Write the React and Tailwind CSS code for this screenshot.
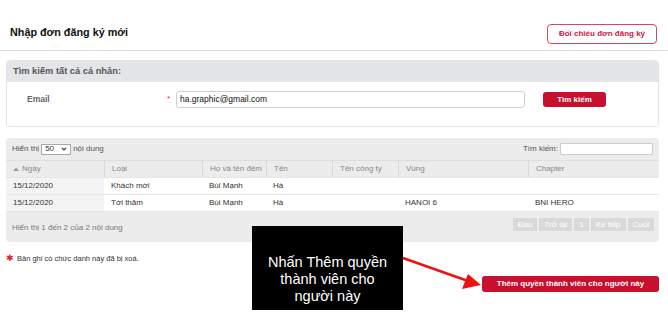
import React from "react";

const font = { fontFamily: '"Liberation Sans", Arial, sans-serif' };

const cols = "grid grid-cols-[98px_98px_64px_66px_66px_130px_1fr]";

function Row({ cells }) {
  return (
    <div className={`${cols} h-[17px] items-center text-[8px] text-[#333] border-t border-[#e6e6e6]`}>
      {cells.map((c, i) => (
        <div key={i} className={`h-full flex items-center px-[7px] whitespace-nowrap ${i === 0 ? "bg-[#f3f3f3]" : "bg-white"}`}>
          {c}
        </div>
      ))}
    </div>
  );
}

export default function App() {
  const headers = ["Ngày", "Loại", "Họ và tên đệm", "Tên", "Tên công ty", "Vùng", "Chapter"];
  return (
    <div className="relative w-[668px] h-[319px] bg-white overflow-hidden" style={font}>
      {/* top bar */}
      <div className="flex items-end justify-between h-[51px] pl-[10px] pr-[11px] pb-[6px] border-b border-[#dcdcdc]">
        <div className="text-[10.8px] font-bold text-[#111] pb-[4px]">Nhập đơn đăng ký mới</div>
        <div className="h-[20px] w-[110px] flex items-center justify-center border border-[#d9465f] rounded-[4px] text-[8px] font-bold text-[#c8203f]">
          Đối chiếu đơn đăng ký
        </div>
      </div>

      {/* search panel */}
      <div className="mx-[6px] mt-[9px] w-[653px] border border-[#e2e2e2] rounded-[4px] overflow-hidden">
        <div className="h-[21px] bg-[#e4e5e8] flex items-center px-[6px] text-[9.3px] font-bold text-[#555]">
          Tìm kiếm tất cả cá nhân:
        </div>
        <div className="h-[44px] bg-white flex items-start pt-[9px]">
          <div className="w-[160px] pl-[20px] h-[17px] flex items-center text-[8.5px] font-bold text-[#666]">Email</div>
          <div className="w-[9px] h-[17px] flex items-start pt-[2px] text-[8px] text-[#e0303a]">*</div>
          <div className="w-[349px] h-[17px] border border-[#cfcfcf] rounded-[3px] flex items-center px-[3px] text-[8.5px] text-[#111]">
            ha.graphic@gmail.com
          </div>
          <div className="ml-[18px] mt-[1px] w-[63px] h-[15px] rounded-[3px] bg-[#c8102e] flex items-center justify-center text-[8px] font-bold text-white">
            Tìm kiếm
          </div>
        </div>
      </div>

      {/* table panel */}
      <div className="mx-[6px] mt-[11px] w-[653px] bg-[#ececec] rounded-[4px] overflow-hidden">
        <div className="h-[22px] flex items-center justify-between px-[6px] text-[8px] text-[#555]">
          <div className="flex items-center gap-[2px]">
            <span>Hiển thị</span>
            <div className="w-[30px] h-[11px] bg-white border border-[#aaa] flex items-center justify-between px-[3px] text-[8px] text-[#333]">
              <span>50</span>
              <svg width="6" height="4" viewBox="0 0 6 4"><path d="M0.8 0.8 L3 3 L5.2 0.8" stroke="#333" strokeWidth="1.1" fill="none" /></svg>
            </div>
            <span>nội dung</span>
          </div>
          <div className="flex items-center gap-[2px]">
            <span>Tìm kiếm:</span>
            <div className="w-[93px] h-[12px] bg-white border border-[#ccc] rounded-[1px]" />
          </div>
        </div>
        <div className={`${cols} h-[17px] text-[8px] text-[#888] bg-[#ececec] border-t border-[#dedede]`}>
          {headers.map((h, i) => (
            <div key={i} className={`flex items-center px-[7px] whitespace-nowrap ${i > 0 ? "border-l border-[#d8d8d8]" : ""}`}>
              {i === 0 && (
                <svg width="6" height="4" viewBox="0 0 6 4" className="mr-[3px]"><path d="M0 4 L3 0.5 L6 4 Z" fill="#999" /></svg>
              )}
              {h}
            </div>
          ))}
        </div>
        <Row cells={["15/12/2020", "Khách mời", "Bùi Mạnh", "Hà", "", "", ""]} />
        <Row cells={["15/12/2020", "Tới thăm", "Bùi Mạnh", "Hà", "", "HANOI 6", "BNI HERO"]} />
        <div className="h-[31px] flex items-start justify-between pl-[6px] pr-[5px] pt-[6px] border-t border-[#e6e6e6]">
          <div className="text-[8px] text-[#777] mt-[4px]">Hiển thị 1 đến 2 của 2 nội dung</div>
          <div className="flex gap-[2px] text-[8px] text-white">
            <div className="h-[13px] px-[5px] bg-[#d9d9dc] flex items-center">Đầu</div>
            <div className="h-[13px] px-[5px] bg-[#d9d9dc] flex items-center">Trở lại</div>
            <div className="h-[13px] px-[5px] bg-[#d9d9dc] flex items-center">1</div>
            <div className="h-[13px] px-[5px] bg-[#d9d9dc] flex items-center">Kế tiếp</div>
            <div className="h-[13px] px-[5px] bg-[#d9d9dc] flex items-center">Cuối</div>
          </div>
        </div>
      </div>

      {/* note */}
      <div className="mt-[11px] pl-[6px] flex items-center gap-[3px] text-[7.5px] text-[#333]">
        <span className="text-[#e0202a] text-[9px] leading-none">✱</span>
        <span>Bản ghi có chức danh này đã bị xoá.</span>
      </div>

      <div className="flex justify-end pr-[9px] mt-[12px]">
        <div className="w-[177px] h-[16px] rounded-[3px] bg-[#c8102e] flex items-center justify-center text-[8px] font-bold text-white">
          Thêm quyền thành viên cho người này
        </div>
      </div>

      {/* callout */}
      <div className="absolute left-[252px] top-[226px] w-[151px] h-[84px] bg-black flex flex-col items-center justify-start text-white text-[14.5px] leading-[17px] text-center pt-[28px]">
        <div>Nhấn Thêm quyền</div>
        <div>thành viên cho</div>
        <div>người này</div>
      </div>
      <svg className="absolute left-0 top-0" width="668" height="319" viewBox="0 0 668 319">
        <line x1="403" y1="258" x2="468" y2="281" stroke="#ee1111" strokeWidth="2.5" />
        <path d="M481 285 L462 289 L468 274 Z" fill="#ee1111" />
      </svg>
    </div>
  );
}
